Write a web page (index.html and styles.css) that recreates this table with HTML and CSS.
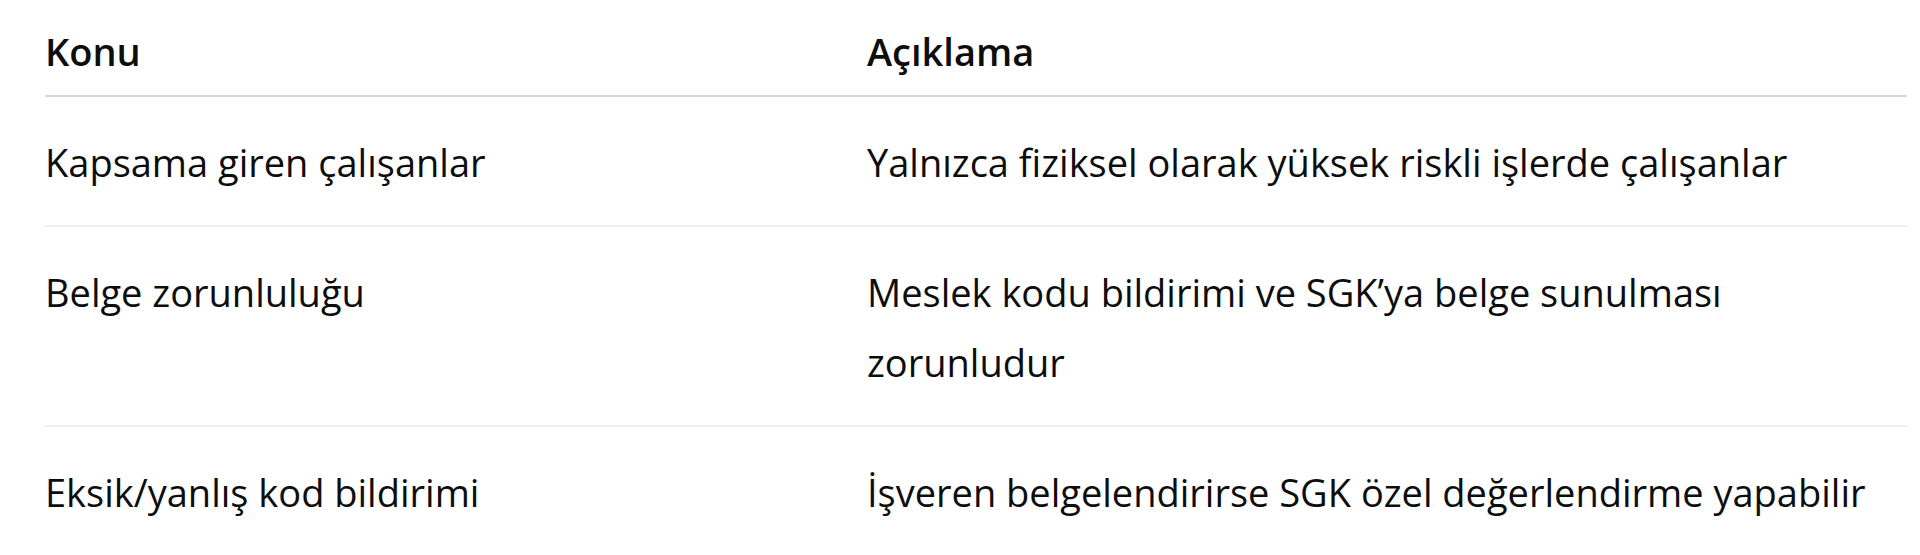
FILE: index.html
```html
<!DOCTYPE html>
<html lang="tr">
<head>
<meta charset="utf-8">
<title>Tablo</title>
<link rel="stylesheet" href="styles.css">
</head>
<body>
<div class="wrap">
  <table class="data">
    <colgroup>
      <col class="c1">
      <col class="c2">
    </colgroup>
    <thead>
      <tr><th>Konu</th><th>Açıklama</th></tr>
    </thead>
    <tbody>
      <tr><td>Kapsama giren çalışanlar</td><td>Yalnızca fiziksel olarak yüksek riskli işlerde çalışanlar</td></tr>
      <tr><td>Belge zorunluluğu</td><td>Meslek kodu bildirimi ve SGK’ya belge sunulması zorunludur</td></tr>
      <tr><td>Eksik/yanlış kod bildirimi</td><td>İşveren belgelendirirse SGK özel değerlendirme yapabilir</td></tr>
    </tbody>
  </table>
</div>
</body>
</html>
```

FILE: styles.css
```css
html, body {
  margin: 0;
  padding: 0;
  background: #ffffff;
}
body {
  font-family: "Open Sans", "Noto Sans", "Liberation Sans", sans-serif;
  color: #0d0d0d;
}
.wrap {
  padding: 16px 13px 0 45px;
}
.data {
  width: 100%;
  border-collapse: collapse;
  table-layout: fixed;
  font-size: 38px;
  line-height: 70px;
}
.c1 { width: 822px; }
.data th {
  text-align: left;
  font-weight: 600;
  padding: 0 0 9px 0;
  border-bottom: 2px solid #d6d6d6;
}
.data td {
  padding: 30px 0 28px;
  border-bottom: 2px solid #efefef;
  vertical-align: top;
}
.data tbody tr:last-child td {
  border-bottom: none;
}
.data td:first-child,
.data th:first-child {
  padding-left: 0;
}
.data td:last-child,
.data th:last-child {
  padding-right: 16px;
}
```
